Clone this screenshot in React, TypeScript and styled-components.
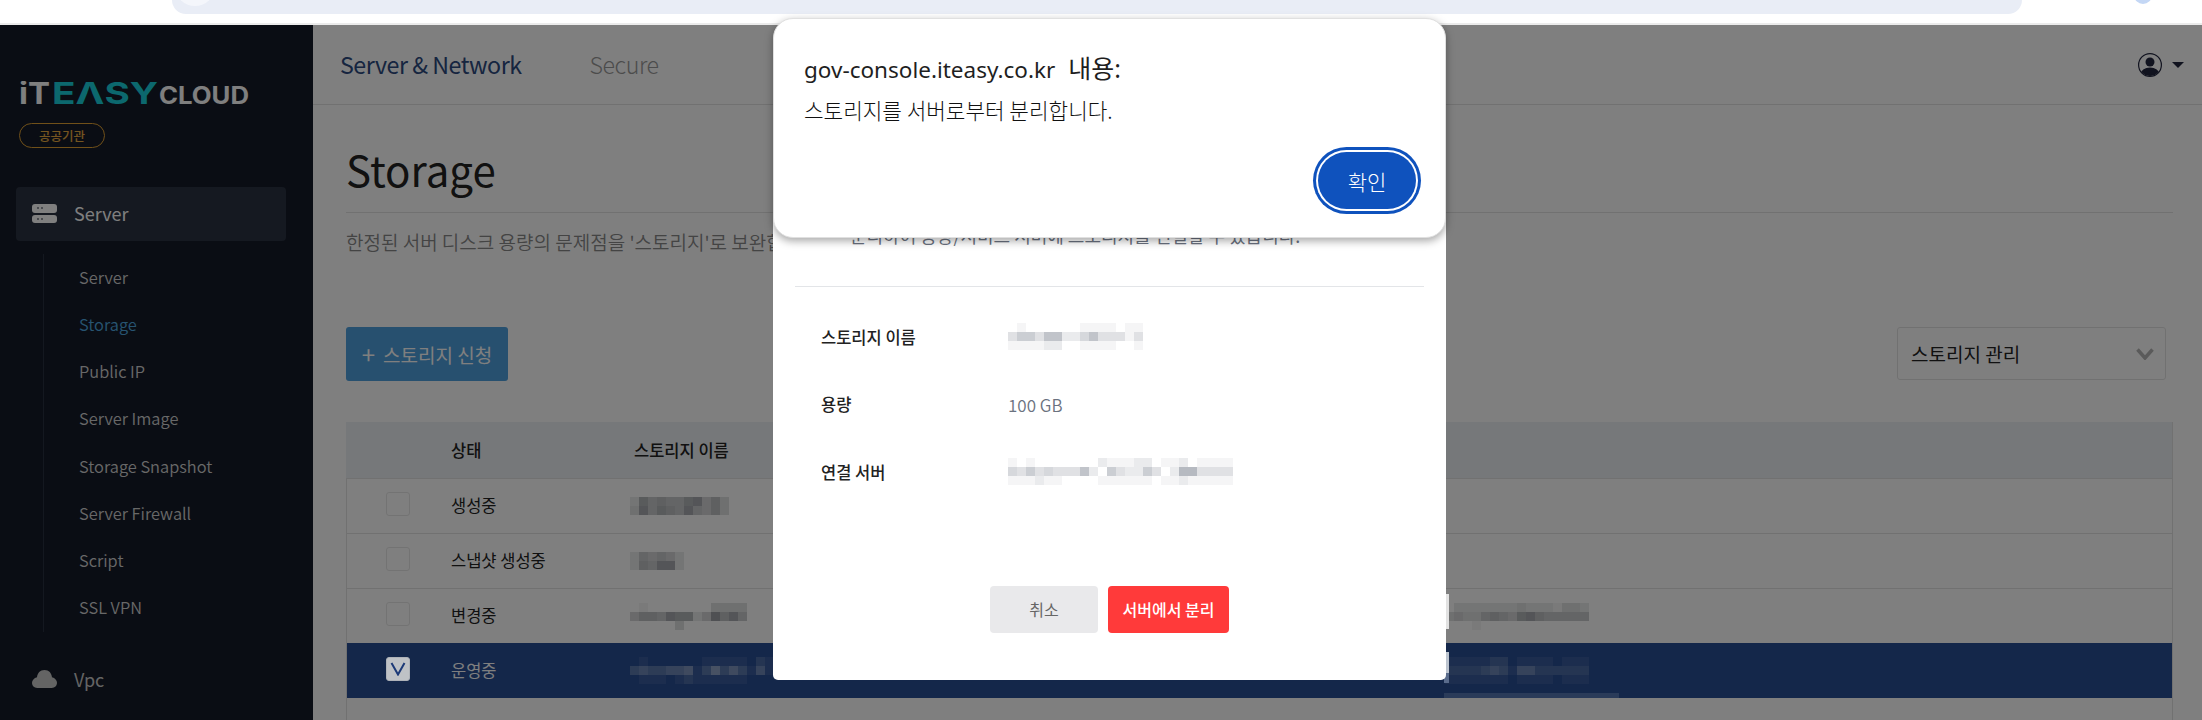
import React from 'react';
import styled, { createGlobalStyle } from 'styled-components';

const GlobalStyle = createGlobalStyle`
  html, body {
    margin: 0;
    padding: 0;
    width: 2202px;
    height: 720px;
    overflow: hidden;
    background: #fff;
    font-family: "Noto Sans CJK KR", "Noto Sans", sans-serif;
  }
  * { box-sizing: border-box; }
`;

// digits are the strength of each redaction cell, one string per row
function Mosaic({ rows, tone, step }: { rows: string[]; tone: string; step: number }) {
  const cols = rows[0].length;
  return (
    <MosaicSvg width={cols * 9} height={rows.length * 9} viewBox={`0 0 ${cols * 9} ${rows.length * 9}`}>
      {rows.map((row, y) =>
        row.split('').map((d, x) => (
          <rect key={`${x}-${y}`} x={x * 9} y={y * 9} width={9} height={9} fill={tone} fillOpacity={Number(d) * step} />
        ))
      )}
    </MosaicSvg>
  );
}

const DARK = { tone: '#3a404a', step: 0.055 };
const LIGHT = { tone: '#ffffff', step: 0.08 };
const SOFT = { tone: '#6b7280', step: 0.07 };

const subMenu = ['Server', 'Storage', 'Public IP', 'Server Image', 'Storage Snapshot', 'Server Firewall', 'Script', 'SSL VPN'];

const tableRows = [
  { status: '생성중', name: ['27565578463', '38576585463'], link: null },
  { status: '스냅샷 생성중', name: ['254542', '265882'], link: null },
  {
    status: '변경중',
    name: ['0100000003333', '4665877249685', '0000030000000'],
    link: ['0222222232221332', '3433565478655555', '0001000000000000'],
  },
  {
    status: '운영중',
    selected: true,
    name: ['0100000011111021', '3433445136353141', '0111012111111000'],
    link: ['1111122011110111', '2222343144222222', '1111111011110111'],
  },
];

function ServerIcon() {
  return (
    <svg width="25" height="19" viewBox="0 0 25 19">
      <rect x="0" y="0" width="25" height="9" rx="3" fill="currentColor" />
      <rect x="0" y="11" width="25" height="8" rx="3" fill="currentColor" />
      <rect x="5" y="3.5" width="2" height="1" fill="#2a3242" />
      <rect x="9" y="3.5" width="2" height="1" fill="#2a3242" />
      <rect x="5" y="14.5" width="2" height="1" fill="#2a3242" />
      <rect x="9" y="14.5" width="2" height="1" fill="#2a3242" />
    </svg>
  );
}

function CloudIcon() {
  return (
    <svg width="25" height="18" viewBox="0 0 25 18">
      <path d="M12.5 0C17 0 19.6 3.2 20 7.2 23 8 25 10.300 25 12.800 25 15.800 22.800 18 19.800 18H5.200C2.200 18 0 15.800 0 12.800 0 10.300 2 8 5 7.200 5.400 3.200 8 0 12.500 0Z" fill="currentColor" />
    </svg>
  );
}

export default function App() {
  return (
    <>
      <GlobalStyle />
      <Chrome>
        <AddressBar>
          <SiteBubble />
          <AddressText>gov-console.iteasy.co.kr/server/storage/list?page=y</AddressText>
        </AddressBar>
        <ChromeAvatar />
      </Chrome>
      <Shell>
        <Sidebar>
          <LogoMark width="232" height="24" viewBox="0 0 232 24">
            <LogoText x="0" y="23" fontSize="30" textLength="31" lengthAdjust="spacingAndGlyphs" fill="#ffffff">iT</LogoText>
            <LogoText x="33" y="23" fontSize="30" textLength="106" lengthAdjust="spacingAndGlyphs" fill="#18d0dc">EΛSY</LogoText>
            <LogoText x="140" y="23" fontSize="24" textLength="90" lengthAdjust="spacingAndGlyphs" fill="#ffffff">CLOUD</LogoText>
          </LogoMark>
          <OrgBadge>공공기관</OrgBadge>
          <MenuItem $active>
            <ServerIcon />
            Server
          </MenuItem>
          <SubList>
            {subMenu.map((item) => (
              <SubItem key={item} $active={item === 'Storage'}>{item}</SubItem>
            ))}
          </SubList>
          <MenuItem>
            <CloudIcon />
            Vpc
          </MenuItem>
        </Sidebar>
        <Main>
          <TopBar>
            <Tab $active>Server &amp; Network</Tab>
            <Tab>Secure</Tab>
            <UserMenu>
              <svg width="24" height="24" viewBox="0 0 24 24">
                <defs>
                  <clipPath id="userClip"><circle cx="12" cy="12" r="11" /></clipPath>
                </defs>
                <circle cx="12" cy="12" r="11.400" fill="none" stroke="#22263e" strokeWidth="1.200" />
                <circle cx="12" cy="9" r="4.500" fill="#22263e" />
                <ellipse cx="12" cy="21" rx="9.500" ry="6.500" fill="#22263e" clipPath="url(#userClip)" />
              </svg>
              <Caret />
            </UserMenu>
          </TopBar>
          <Content>
            <PageTitle>Storage</PageTitle>
            <PageDesc>한정된 서버 디스크 용량의 문제점을 '스토리지'로 보완합니다. 필요한 만큼 확장하여 사용할 수 있습니다.</PageDesc>
            <Toolbar>
              <ApplyButton><Plus>+</Plus>스토리지 신청</ApplyButton>
              <SelectBox>
                스토리지 관리
                <svg width="18" height="12" viewBox="0 0 18 12">
                  <path d="M1.500 1.500 9 10 16.500 1.500" fill="none" stroke="#b4b4b4" strokeWidth="3.500" />
                </svg>
              </SelectBox>
            </Toolbar>
            <Table>
              <HeadRow>
                <span />
                <HeadCell>상태</HeadCell>
                <HeadCell>스토리지 이름</HeadCell>
              </HeadRow>
              {tableRows.map((row) => (
                <BodyRow key={row.status} $selected={row.selected}>
                  <Check $checked={row.selected}>
                    {row.selected && (
                      <svg width="16" height="14" viewBox="0 0 16 14">
                        <path d="M1.500 1 8 12.500 14.500 1" fill="none" stroke="#1d3a78" strokeWidth="2" />
                      </svg>
                    )}
                  </Check>
                  <StatusCell>{row.status}</StatusCell>
                  <NameCell>
                    <Mosaic rows={row.name} {...(row.selected ? LIGHT : DARK)} />
                  </NameCell>
                  <LinkCell>
                    {row.link && <Mosaic rows={row.link} {...(row.selected ? LIGHT : DARK)} />}
                  </LinkCell>
                </BodyRow>
              ))}
            </Table>
          </Content>
        </Main>
        <Dim />
        <EdgeTop />
        <EdgeBottom />
        <EdgeStrip />
        <Modal>
          <ModalDesc>분리하여 용량/서비스 서버에 스토리지를 연결할 수 있습니다.</ModalDesc>
          <ModalRule />
          <InfoRow>
            <InfoLabel>스토리지 이름</InfoLabel>
            <Mosaic rows={['010000001111011', '355366224633313', '111122001111001']} {...SOFT} />
          </InfoRow>
          <InfoRow>
            <InfoLabel>용량</InfoLabel>
            <InfoValue>100 GB</InfoValue>
          </InfoRow>
          <InfoRow>
            <InfoLabel>연결 서버</InfoLabel>
            <Mosaic rows={['1010000000211122011201111', '4353433362053225302773333', '1112110000111111011211111']} {...SOFT} />
          </InfoRow>
          <ModalActions>
            <CancelButton>취소</CancelButton>
            <DetachButton>서버에서 분리</DetachButton>
          </ModalActions>
        </Modal>
      </Shell>
      <AlertBox>
        <AlertTitle>gov-console.iteasy.co.kr <AlertTitleKo>내용:</AlertTitleKo></AlertTitle>
        <AlertMessage>스토리지를 서버로부터 분리합니다.</AlertMessage>
        <AlertActions>
          <AlertButton>확인</AlertButton>
        </AlertActions>
      </AlertBox>
    </>
  );
}

const MosaicSvg = styled.svg`
  display: block;
  flex: none;
`;

const Chrome = styled.div`
  height: 25px;
  background: #fff;
  border-bottom: 2px solid #ebebeb;
  display: flex;
  padding-left: 172px;
  overflow: hidden;
`;
const AddressBar = styled.div`
  width: 1850px;
  height: 14px;
  background: #e9edf6;
  border-radius: 0 0 20px 20px;
  overflow: hidden;
  display: flex;
`;
const SiteBubble = styled.div`
  width: 40px;
  height: 40px;
  margin: -34px 0 0 3px;
  border-radius: 50%;
  background: #f4f6fb;
  flex: none;
`;
const AddressText = styled.div`
  margin: -21px 0 0 10px;
  font: 16px/22px "Noto Sans", sans-serif;
  color: #222;
  white-space: nowrap;
`;
const ChromeAvatar = styled.div`
  width: 18px;
  height: 18px;
  margin: -14px 0 0 112px;
  border-radius: 50%;
  background: #c4d7f5;
`;

const Shell = styled.div`
  position: relative;
  height: 695px;
  display: flex;
  overflow: hidden;
`;

const Sidebar = styled.aside`
  width: 313px;
  flex: none;
  background: #141a28;
  padding: 56px 27px 0 16px;
  color: #fff;
`;
const LogoMark = styled.svg`
  display: block;
  margin-left: 3px;
`;
const LogoText = styled.text`
  font-family: Inter, "Liberation Sans", sans-serif;
  font-weight: 700;
`;
const OrgBadge = styled.div`
  width: 86px;
  height: 25px;
  margin: 18px 0 39px 3px;
  border: 1px solid #e0a032;
  border-radius: 13px;
  color: #e8ab40;
  font-size: 12.5px;
  font-weight: 500;
  display: flex;
  align-items: center;
  justify-content: center;
`;
const MenuItem = styled.div<{ $active?: boolean }>`
  height: 54px;
  padding: 0 0 2px 16px;
  display: flex;
  align-items: center;
  gap: 17px;
  font-size: 18px;
  border-radius: 4px;
  background: ${(p) => (p.$active ? '#2a3242' : 'transparent')};
  color: ${(p) => (p.$active ? '#ffffff' : '#c8c8c8')};
`;
const SubList = styled.div`
  margin: 13px 0 21px 27px;
  border-left: 1px solid #283040;
`;
const SubItem = styled.div<{ $active?: boolean }>`
  height: 47.25px;
  padding: 0 0 2px 35px;
  display: flex;
  align-items: center;
  font-size: 16.4px;
  font-weight: 350;
  color: ${(p) => (p.$active ? '#4fa9e0' : '#d0d0d0')};
`;

const Main = styled.main`
  flex: 1;
  min-width: 0;
  background: #fff;
`;
const TopBar = styled.header`
  height: 80px;
  padding: 0 18px 0 27px;
  border-bottom: 1px solid #e2e2e2;
  display: flex;
  align-items: center;
  gap: 68px;
`;
const Tab = styled.div<{ $active?: boolean }>`
  font-size: 23.2px;
  letter-spacing: -0.45px;
  font-weight: ${(p) => (p.$active ? 400 : 300)};
  color: ${(p) => (p.$active ? '#2d4a80' : '#999999')};
  margin-top: -2px;
`;
const UserMenu = styled.div`
  margin-left: auto;
  display: flex;
  align-items: center;
  gap: 10px;
`;
const Caret = styled.div`
  width: 0;
  height: 0;
  border-left: 6px solid transparent;
  border-right: 6px solid transparent;
  border-top: 6px solid #22263e;
`;

const Content = styled.div`
  padding: 0 29px 0 33px;
`;
const PageTitle = styled.h1`
  margin: 0;
  height: 108px;
  padding-top: 34px;
  border-bottom: 1px solid #e2e2e2;
  font-size: 42px;
  line-height: 60px;
  font-weight: 400;
  color: #222;
`;
const PageDesc = styled.p`
  margin: 16px 0 0;
  font-size: 19px;
  line-height: 26px;
  font-weight: 350;
  color: #888;
  white-space: nowrap;
`;
const Toolbar = styled.div`
  margin-top: 72px;
  padding-right: 7px;
  display: flex;
  justify-content: space-between;
  align-items: flex-start;
`;
const ApplyButton = styled.div`
  width: 162px;
  height: 54px;
  border-radius: 3px;
  background: #4ea0de;
  color: #fff;
  font-size: 19px;
  font-weight: 400;
  display: flex;
  align-items: center;
  justify-content: center;
`;
const Plus = styled.span`
  font-size: 24px;
  margin-right: 8px;
  line-height: 1;
`;
const SelectBox = styled.div`
  width: 269px;
  height: 53px;
  border: 1px solid #e2e2e2;
  border-radius: 3px;
  padding: 0 11px 0 13px;
  font-size: 19px;
  color: #222;
  display: flex;
  align-items: center;
  justify-content: space-between;
`;

const Table = styled.div`
  margin-top: 41px;
  height: 300px;
  border-left: 1px solid #e2e2e2;
  border-right: 1px solid #e2e2e2;
`;
const columns = 'grid-template-columns: 104px 183px 811px 1fr;';
const HeadRow = styled.div`
  display: grid;
  ${columns}
  height: 56px;
  align-items: center;
  background: #edf0f4;
  margin-left: -1px;
  padding-left: 1px;
`;
const HeadCell = styled.div`
  font-size: 16.5px;
  font-weight: 500;
  color: #222;
`;
const BodyRow = styled.div<{ $selected?: boolean }>`
  display: grid;
  ${columns}
  height: 55px;
  align-items: center;
  border-top: ${(p) => (p.$selected ? 'none' : '1px solid #e2e2e2')};
  background: ${(p) => (p.$selected ? '#284e94' : 'transparent')};
  color: ${(p) => (p.$selected ? '#fff' : '#222')};
`;
const Check = styled.div<{ $checked?: boolean }>`
  width: 24px;
  height: 24px;
  margin: -4px 0 0 39px;
  border-radius: 3px;
  border: 1px solid ${(p) => (p.$checked ? '#aeb2b8' : '#e6e6e6')};
  background: ${(p) => (p.$checked ? '#bfc2c6' : 'transparent')};
  display: flex;
  align-items: center;
  justify-content: center;
  ${(p) => p.$checked && 'position: relative; z-index: 3;'}
`;
const StatusCell = styled.div`
  font-size: 16.5px;
  padding-bottom: 2px;
`;
const NameCell = styled.div`
  margin-left: -4px;
`;
const LinkCell = styled.div``;

const Dim = styled.div`
  position: absolute;
  inset: 0;
  background: rgba(0, 0, 0, 0.5);
  z-index: 2;
`;
const EdgeTop = styled.div`
  position: absolute;
  left: 1446px;
  top: 569px;
  width: 3px;
  height: 35px;
  background: #e2e2e2;
  z-index: 3;
`;
const EdgeBottom = styled.div`
  position: absolute;
  left: 1444px;
  top: 627px;
  width: 5px;
  height: 31px;
  background: linear-gradient(#bcc4cf 68%, #5a6c8c 68%);
  z-index: 3;
`;
const EdgeStrip = styled.div`
  position: absolute;
  left: 1444px;
  top: 668px;
  width: 175px;
  height: 5px;
  background: #2a3b59;
  z-index: 3;
`;

const Modal = styled.section`
  position: absolute;
  left: 773px;
  top: 60px;
  width: 673px;
  height: 595px;
  background: #fff;
  border-radius: 5px;
  padding: 137px 22px 0;
  z-index: 4;
`;
const ModalDesc = styled.p`
  margin: 0;
  padding-left: 55px;
  font-size: 18px;
  line-height: 26px;
  color: #6b7280;
`;
const ModalRule = styled.div`
  margin: 38px 0 16px;
  height: 1px;
  background: #e3e5e8;
`;
const InfoRow = styled.div`
  height: 67.5px;
  padding-left: 26px;
  display: flex;
  align-items: center;
`;
const InfoLabel = styled.div`
  width: 187px;
  font-size: 16.5px;
  font-weight: 500;
  color: #222;
`;
const InfoValue = styled.div`
  font-size: 17px;
  font-weight: 350;
  color: #6b7280;
`;
const ModalActions = styled.div`
  margin-top: 80px;
  display: flex;
  justify-content: center;
  gap: 10px;
`;
const CancelButton = styled.div`
  width: 108px;
  height: 47px;
  border-radius: 4px;
  background: #e9e9eb;
  color: #666;
  font-size: 16px;
  display: flex;
  align-items: center;
  justify-content: center;
`;
const DetachButton = styled(CancelButton)`
  width: 121px;
  background: #ff3a3a;
  color: #fff;
  font-weight: 500;
`;

const AlertBox = styled.div`
  position: absolute;
  left: 773px;
  top: 18px;
  width: 673px;
  height: 220px;
  padding: 33px 25px 0 30px;
  background: #fff;
  border: 1px solid #e0e0e0;
  border-radius: 20px;
  box-shadow: 0 3px 8px rgba(0, 0, 0, 0.35);
  z-index: 5;
`;
const AlertTitle = styled.div`
  font: 22.5px/32px "Noto Sans", "Noto Sans CJK KR", sans-serif;
  color: #1f1f1f;
`;
const AlertTitleKo = styled.span`
  font-size: 25px;
  margin-left: 7px;
`;
const AlertMessage = styled.div`
  margin-top: 10px;
  font: 300 21.3px/28px "Noto Sans CJK KR", sans-serif;
  color: #111;
`;
const AlertActions = styled.div`
  margin-top: 28px;
  display: flex;
  justify-content: flex-end;
  padding-right: 4px;
`;
const AlertButton = styled.div`
  width: 98px;
  height: 57px;
  border-radius: 29px;
  background: #0f52bd;
  box-shadow: 0 0 0 2px #fff, 0 0 0 5px #0f52bd;
  color: #fff;
  font-size: 21px;
  font-weight: 300;
  display: flex;
  align-items: center;
  justify-content: center;
`;
